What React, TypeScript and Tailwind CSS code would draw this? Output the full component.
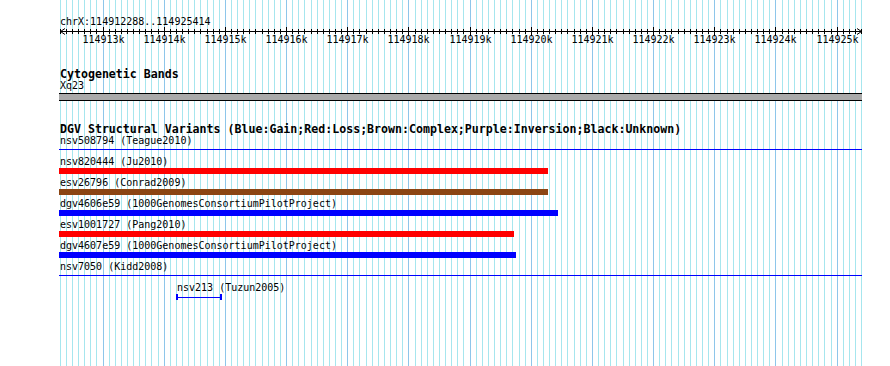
import React from "react";

const START = 114912288;
const END = 114925414;
const LEFT = 59;
const WIDTH = 803;
const SCALE = WIDTH / (END - START);
const MONO = "'DejaVu Sans Mono', 'Liberation Mono', monospace";

function toX(pos: number) {
  return Math.round(LEFT + (pos - START) * SCALE);
}

const gridPositions: number[] = [];
for (let p = Math.ceil(START / 100) * 100; p <= END; p += 100) gridPositions.push(p);

const kbLabels: number[] = [];
for (let k = Math.ceil(START / 1000); k * 1000 <= END; k++) kbLabels.push(k);

type Variant = {
  name: string;
  kind: "line" | "bar" | "span";
  color: string;
  start?: number; // px from page left
  end?: number;
};

const variants: Variant[] = [
  { name: "nsv508794 (Teague2010)", kind: "line", color: "#0000ff" },
  { name: "nsv820444 (Ju2010)", kind: "bar", color: "#ff0000", end: 548 },
  { name: "esv26796 (Conrad2009)", kind: "bar", color: "#8b4513", end: 548 },
  { name: "dgv4606e59 (1000GenomesConsortiumPilotProject)", kind: "bar", color: "#0000ff", end: 558 },
  { name: "esv1001727 (Pang2010)", kind: "bar", color: "#ff0000", end: 514 },
  { name: "dgv4607e59 (1000GenomesConsortiumPilotProject)", kind: "bar", color: "#0000ff", end: 516 },
  { name: "nsv7050 (Kidd2008)", kind: "line", color: "#0000ff" },
  { name: "nsv213 (Tuzun2005)", kind: "span", color: "#0000ff", start: 176, end: 222 },
];

function Grid() {
  return (
    <svg className="absolute left-0 top-0" width={890} height={366}>
      {gridPositions.map((p) => (
        <rect
          key={p}
          x={toX(p)}
          y={0}
          width={1}
          height={366}
          fill={p % 1000 === 0 ? "#8ec6ea" : "#a6e6ee"}
        />
      ))}
    </svg>
  );
}

function Ruler() {
  return (
    <svg width={WIDTH + 2} height={20} className="block">
      <line x1={1} y1={4.5} x2={WIDTH} y2={4.5} stroke="#000" />
      <polyline points="6,1.5 1.5,4.5 6,7.5" fill="none" stroke="#000" />
      <polyline points={`${WIDTH - 5},1.5 ${WIDTH - 0.5},4.5 ${WIDTH - 5},7.5`} fill="none" stroke="#000" />
      {gridPositions.map((p) => {
        const x = toX(p) - LEFT + 0.5;
        const major = p % 1000 === 0;
        return (
          <line key={p} x1={x} x2={x} y1={major ? 0 : 2} y2={major ? 9 : 7} stroke="#000" />
        );
      })}
      {kbLabels.map((k) => (
        <text
          key={k}
          x={toX(k * 1000) - LEFT + 0.5}
          y={16}
          textAnchor="middle"
          fontFamily={MONO}
          fontSize={10}
          fill="#000"
        >
          {k}k
        </text>
      ))}
    </svg>
  );
}

function VariantRow({ v }: { v: Variant }) {
  const offset = v.kind === "span" ? (v.start ?? LEFT) - LEFT : 0;
  return (
    <div className="h-[21px]">
      <div className="h-[11px] whitespace-pre text-[10px] leading-[10px]" style={{ paddingLeft: offset + 1 }}>
        {v.name}
      </div>
      {v.kind === "line" && (
        <div className="h-[6px] pt-[2px]">
          <div className="h-px w-full" style={{ backgroundColor: v.color }} />
        </div>
      )}
      {v.kind === "bar" && (
        <div className="h-[6px]" style={{ width: (v.end ?? 0) - LEFT, backgroundColor: v.color }} />
      )}
      {v.kind === "span" && (
        <div
          className="flex h-[6px] items-center border-x-2"
          style={{ marginLeft: offset, width: (v.end ?? 0) - (v.start ?? 0), borderColor: v.color }}
        >
          <div className="h-px w-full" style={{ backgroundColor: v.color }} />
        </div>
      )}
    </div>
  );
}

export default function App() {
  return (
    <div className="relative h-[366px] w-[890px] overflow-hidden bg-white text-black font-['DejaVu_Sans_Mono','Liberation_Mono',monospace]">
      <Grid />
      <div className="relative ml-[59px] w-[803px] pt-[17px]">
        <div className="h-[10px] pl-px text-[10px] leading-[10px]">chrX:114912288..114925414</div>
        <Ruler />

        <div className="mt-[21px] h-[12px] pl-px text-[11.6px] font-bold leading-[12px]">Cytogenetic Bands</div>
        <div className="mt-px h-[10px] pl-px text-[10px] leading-[10px]">Xq23</div>
        <div className="mt-[2px] h-[8px] border-y border-black bg-[#aaaaaa]" />

        <div className="mt-[22px] h-[12px] whitespace-pre pl-px text-[11.6px] font-bold leading-[12px]">
          DGV Structural Variants (Blue:Gain;Red:Loss;Brown:Complex;Purple:Inversion;Black:Unknown)
        </div>
        <div className="mt-px">
          {variants.map((v) => (
            <VariantRow key={v.name} v={v} />
          ))}
        </div>
      </div>
    </div>
  );
}
